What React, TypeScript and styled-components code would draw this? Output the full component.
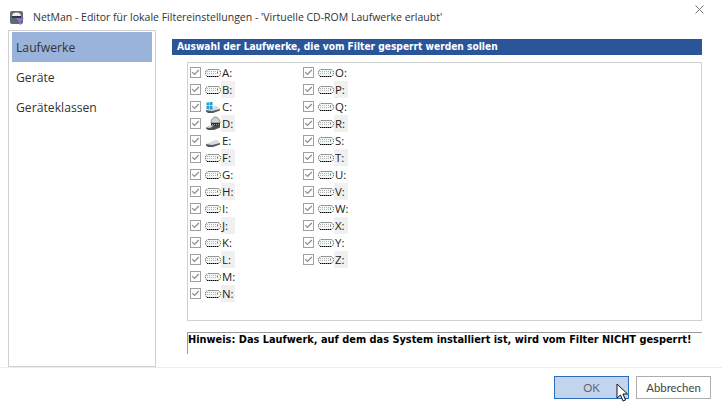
import styled, { createGlobalStyle } from "styled-components";

const GlobalStyle = createGlobalStyle`
  html, body {
    margin: 0;
    padding: 0;
    background: #fff;
  }
`;

const Dialog = styled.div`
  position: relative;
  width: 722px;
  height: 410px;
  overflow: hidden;
  display: flex;
  flex-direction: column;
  background: #fff;
  font-family: "Open Sans", "Noto Sans", sans-serif;
  color: #222;
`;

const TitleBar = styled.div`
  height: 30px;
  display: flex;
  align-items: center;
  padding: 0 18px 0 10px;
  box-sizing: border-box;
`;

const TitleIcon = styled.svg`
  margin-top: 4px;
  flex: none;
`;

const Title = styled.div`
  margin-left: 9px;
  padding-top: 4px;
  flex: 1;
  font-size: 10.5px;
  color: #333;
  white-space: nowrap;
`;

const CloseIcon = styled.svg`
  align-self: flex-start;
  margin-top: 5px;
`;

const Body = styled.div`
  height: 337px;
  display: flex;
  padding-left: 8px;
  border-bottom: 1px solid #ececec;
`;

const Sidebar = styled.div`
  width: 148px;
  height: 337px;
  box-sizing: border-box;
  border: 1px solid #d0d0d0;
  padding: 1px 3px;
  display: flex;
  flex-direction: column;
`;

const NavItem = styled.div<{ $active?: boolean }>`
  height: 30px;
  display: flex;
  align-items: center;
  padding-left: 4px;
  font-size: 12.2px;
  color: #333;
  background: ${(p) => (p.$active ? "#9ab3da" : "transparent")};
`;

const Main = styled.div`
  width: 530px;
  margin-left: 16px;
  padding-top: 9px;
  display: flex;
  flex-direction: column;
`;

const Heading = styled.div`
  height: 16px;
  line-height: 16px;
  padding-left: 5px;
  background: #2a5699;
  color: #fff;
  font-family: "DejaVu Sans Condensed", "DejaVu Sans", sans-serif;
  font-size: 10.15px;
  font-weight: 700;
  white-space: nowrap;
`;

const DriveBox = styled.div`
  margin: 7px 0 0 15px;
  height: 259px;
  box-sizing: border-box;
  border: 1px solid #d0d0d0;
  padding: 1px 0 0 2px;
  display: grid;
  grid-auto-flow: column;
  grid-template-rows: repeat(14, 17px);
  grid-template-columns: 113px 113px;
`;

const DriveRow = styled.div`
  display: flex;
  align-items: center;
`;

const Check = styled.span`
  width: 11px;
  height: 11px;
  box-sizing: border-box;
  border: 1px solid #a0a0a0;
  display: flex;
  align-items: center;
  justify-content: center;
  flex: none;
`;

const IconSlot = styled.span`
  margin-left: 4px;
  width: 16px;
  height: 15px;
  display: flex;
  align-items: center;
  flex: none;
`;

const DriveLabel = styled.span<{ $shaded: boolean }>`
  width: 13px;
  height: 17px;
  line-height: 17px;
  padding-left: 1px;
  font-size: 11.4px;
  color: #222;
  white-space: nowrap;
  background: ${(p) => (p.$shaded ? "#f0f0f0" : "transparent")};
`;

const Hint = styled.div`
  margin: 11px 0 0 15px;
  height: 22px;
  box-sizing: border-box;
  border-top: 1px solid #9a9a9a;
  border-left: 1px solid #9a9a9a;
  font-family: "DejaVu Sans Condensed", "DejaVu Sans", sans-serif;
  font-size: 10.9px;
  font-weight: 700;
  line-height: 13px;
  color: #000;
  white-space: nowrap;
`;

const Footer = styled.div`
  flex: 1;
  display: flex;
  justify-content: flex-end;
  gap: 7px;
  padding: 8px 11px 0 0;
`;

const Button = styled.div<{ $primary?: boolean }>`
  width: 75px;
  height: 23px;
  box-sizing: border-box;
  display: flex;
  align-items: center;
  justify-content: center;
  font-family: Lato, "Open Sans", sans-serif;
  font-size: 11.4px;
  color: ${(p) => (p.$primary ? "#666" : "#444")};
  background: ${(p) => (p.$primary ? "#c3d5ee" : "#fff")};
  border: 1px solid ${(p) => (p.$primary ? "#2a6cb5" : "#adadad")};
`;

const Cursor = styled.svg`
  position: absolute;
  left: 616px;
  top: 383px;
`;

const TickIcon = () => (
  <svg width="9" height="9" viewBox="0 0 9 9">
    <path d="M1.2 4.2 L3.5 6.5 L7.8 2" fill="none" stroke="#8c8c8c" strokeWidth="1.2" />
  </svg>
);

const FloppyIcon = () => (
  <svg width="16" height="9" viewBox="0 -1 16 9">
    <rect x="0.5" y="0.5" width="15" height="7" rx="3" fill="#f6f6f6" stroke="#333" strokeWidth="1" strokeDasharray="1 1" />
    <path d="M2 2.5 H14 M2 4.5 H14" stroke="#b5b5b5" strokeWidth="1" strokeDasharray="1 1" />
    <path d="M2 7.5 H14" stroke="#000" strokeWidth="1" strokeDasharray="1 1" />
    <rect x="12" y="3" width="1" height="1" fill="#2aa84a" />
  </svg>
);

const DiskBase = () => (
  <>
    <path d="M1 11 L10 7 H12 L15 10 L7 12 Z" fill="#d9dcdf" />
    <path d="M1 11 L7 12 L15 10 V11.5 L8 14 H3 L1 12.5 Z" fill="#55595d" />
  </>
);

const SystemIcon = () => (
  <svg width="16" height="15" viewBox="0 0 16 15">
    <DiskBase />
    <rect x="1.5" y="3.5" width="2.5" height="3" fill="#1f9fd8" />
    <rect x="4.5" y="3" width="3" height="3.5" fill="#1f9fd8" />
    <rect x="1.5" y="7" width="2.5" height="3" fill="#1f9fd8" />
    <rect x="4.5" y="7" width="3" height="3.5" fill="#1f9fd8" />
  </svg>
);

const CdromIcon = () => (
  <svg width="16" height="15" viewBox="0 0 16 15">
    <path d="M6 7 A4.5 6 0 0 1 15 7 Z" fill="#cfd2d5" stroke="#666" strokeWidth="0.7" />
    <path d="M6 7 H15 V10 H6 Z" fill="#2a2a2a" />
    <path d="M7 8.5 H14" stroke="#aaa" strokeWidth="1" strokeDasharray="1 1" />
    <path d="M1 11.5 L6 9.5 H15 V11.5 L9 14 H3 L1 12.5 Z" fill="#4e5054" />
    <path d="M1 11.5 L6 9.5 H9 L5 12 Z" fill="#d9dcdf" />
  </svg>
);

const PlainDiskIcon = () => (
  <svg width="16" height="15" viewBox="0 0 16 15">
    <DiskBase />
  </svg>
);

const MainIcon = () => (
  <TitleIcon width="14" height="15" viewBox="0 0 14 15">
    <rect x="0" y="1" width="13" height="13" rx="2" fill="#5d6b73" />
    <path d="M2 6 A4.5 3.5 0 0 1 11 6 Z" fill="#eceded" />
    <rect x="2" y="6" width="9" height="2" fill="#2f383d" />
    <path d="M6 8 H14 L11 11.5 V15 L9 14 V11.5 Z" fill="#8f6fd0" />
  </TitleIcon>
);

const driveIcons: Record<string, () => React.JSX.Element> = {
  C: SystemIcon,
  D: CdromIcon,
  E: PlainDiskIcon,
};

const letters = "ABCDEFGHIJKLMNOPQRSTUVWXYZ".split("");

function App() {
  return (
    <Dialog>
      <GlobalStyle />
      <TitleBar>
        <MainIcon />
        <Title>NetMan - Editor für lokale Filtereinstellungen - 'Virtuelle CD-ROM Laufwerke erlaubt'</Title>
        <CloseIcon width="9" height="9" viewBox="0 0 9 9">
          <path d="M0.5 0.5 L8.5 8.5 M8.5 0.5 L0.5 8.5" stroke="#777" strokeWidth="1" />
        </CloseIcon>
      </TitleBar>
      <Body>
        <Sidebar>
          <NavItem $active>Laufwerke</NavItem>
          <NavItem>Geräte</NavItem>
          <NavItem>Geräteklassen</NavItem>
        </Sidebar>
        <Main>
          <Heading>Auswahl der Laufwerke, die vom Filter gesperrt werden sollen</Heading>
          <DriveBox>
            {letters.map((letter, i) => {
              const Icon = driveIcons[letter] ?? FloppyIcon;
              return (
                <DriveRow key={letter}>
                  <Check>
                    <TickIcon />
                  </Check>
                  <IconSlot>
                    <Icon />
                  </IconSlot>
                  <DriveLabel $shaded={i % 2 === 1}>{letter}:</DriveLabel>
                </DriveRow>
              );
            })}
          </DriveBox>
          <Hint>Hinweis: Das Laufwerk, auf dem das System installiert ist, wird vom Filter NICHT gesperrt!</Hint>
        </Main>
      </Body>
      <Footer>
        <Button $primary>OK</Button>
        <Button>Abbrechen</Button>
      </Footer>
      <Cursor width="13" height="20" viewBox="0 0 13 20">
        <path d="M1 1 V15 L4.5 12 L7 18 L9.5 17 L7 11 H11.5 Z" fill="#fff" stroke="#111" strokeWidth="1" />
      </Cursor>
    </Dialog>
  );
}

export default App;
